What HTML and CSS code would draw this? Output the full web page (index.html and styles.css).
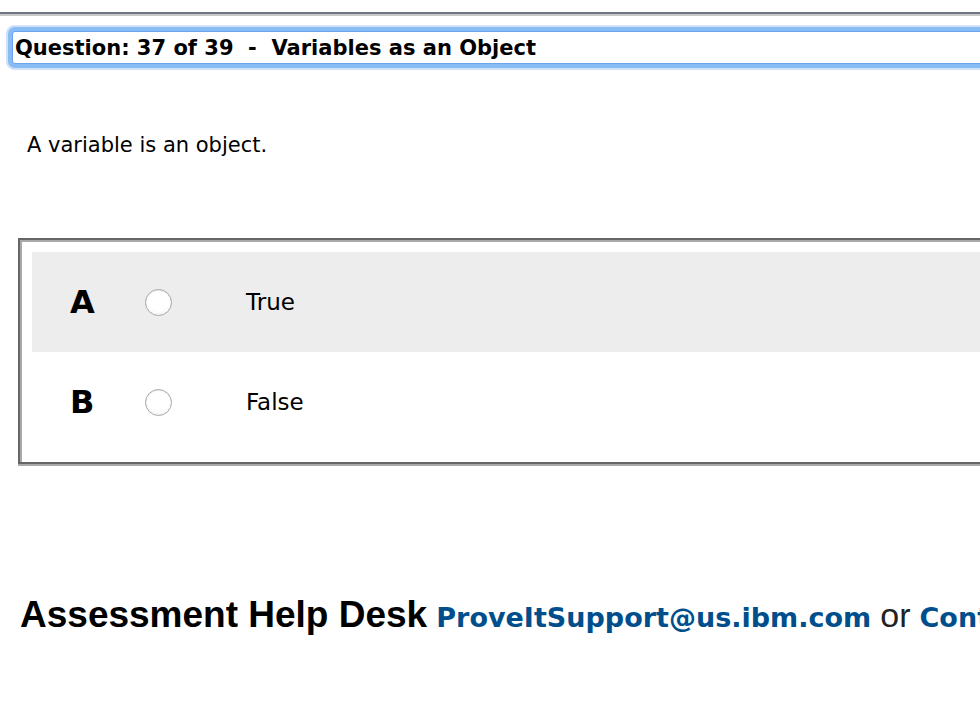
FILE: index.html
```html
<!DOCTYPE html>
<html>
<head>
<meta charset="utf-8">
<title>Question 37 of 39</title>
<link rel="stylesheet" href="styles.css">
</head>
<body>
<div class="page">
  <div class="topbar"></div>
  <div class="topline"></div>
  <div class="qtitle">Question: 37 of 39&nbsp; -&nbsp; Variables as an Object</div>
  <p class="qtext">A variable is an object.</p>
  <div class="options">
    <div class="opt shaded">
      <span class="letter">A</span>
      <span class="radio"></span>
      <span class="answer">True</span>
    </div>
    <div class="opt">
      <span class="letter">B</span>
      <span class="radio"></span>
      <span class="answer">False</span>
    </div>
  </div>
  <div class="help">
    <span class="help-title">Assessment Help Desk</span>
    <a class="help-link" href="#">ProveItSupport@us.ibm.com</a>
    <span class="help-or">or</span>
    <a class="help-link" href="#">Contact Us</a>
  </div>
</div>
</body>
</html>
```
FILE: styles.css
```css
html, body {
  margin: 0;
  padding: 0;
  background: #ffffff;
  overflow: hidden;
}
body {
  font-family: "DejaVu Sans", Verdana, sans-serif;
  color: #000;
  width: 980px;
  height: 728px;
}
.page {
  width: 1200px;
}
.topbar {
  height: 12px;
  border-bottom: 2px solid #6d7580;
}
.topline {
  height: 2px;
  background: #c8c8c8;
}
.qtitle {
  margin: 15px 0 0 12px;
  height: 31px;
  line-height: 33px;
  border: 1px solid #6aa5ec;
  border-radius: 3px;
  box-shadow: 0 0 0 4px #89bbf4, 0 0 0 6px #cfe2fa;
  background: #fff;
  padding-left: 2px;
  font-weight: bold;
  font-size: 21px;
  white-space: nowrap;
  overflow: hidden;
}
.qtext {
  margin: 69px 0 0 27px;
  font-size: 21px;
  line-height: 24px;
}
.options {
  margin: 81px 0 0 18px;
  border: 2px solid #666;
  box-shadow: inset 2px 2px 0 #a9a9a9, 0 2px 0 #a9a9a9;
  padding: 12px 0 10px 12px;
}
.opt {
  height: 100px;
  display: flex;
  align-items: center;
}
.opt.shaded {
  background: #ededed;
}
.letter {
  width: 113px;
  padding-left: 38px;
  box-sizing: border-box;
  font-weight: bold;
  font-size: 32px;
}
.radio {
  width: 27px;
  height: 27px;
  box-sizing: border-box;
  border-radius: 50%;
  border: 1px solid #a8a8a8;
  background: radial-gradient(circle at 50% 40%, #ffffff 55%, #f2f2f2 80%, #dcdcdc 100%);
  box-shadow: inset 0 1px 1px rgba(0,0,0,0.08);
}
.answer {
  margin-left: 74px;
  font-size: 23px;
}
.help {
  margin: 130px 0 0 20px;
  white-space: nowrap;
  line-height: 42px;
}
.help-title {
  font-family: "Liberation Sans", Arial, sans-serif;
  font-weight: bold;
  font-size: 37px;
}
.help-link {
  font-family: "DejaVu Sans", Verdana, sans-serif;
  font-weight: bold;
  font-size: 27px;
  color: #004f8c;
  text-decoration: none;
  margin-left: 4px;
}
.help-or {
  font-family: "Liberation Sans", Arial, sans-serif;
  font-size: 34px;
  color: #222;
  margin-left: 4px;
}
```
